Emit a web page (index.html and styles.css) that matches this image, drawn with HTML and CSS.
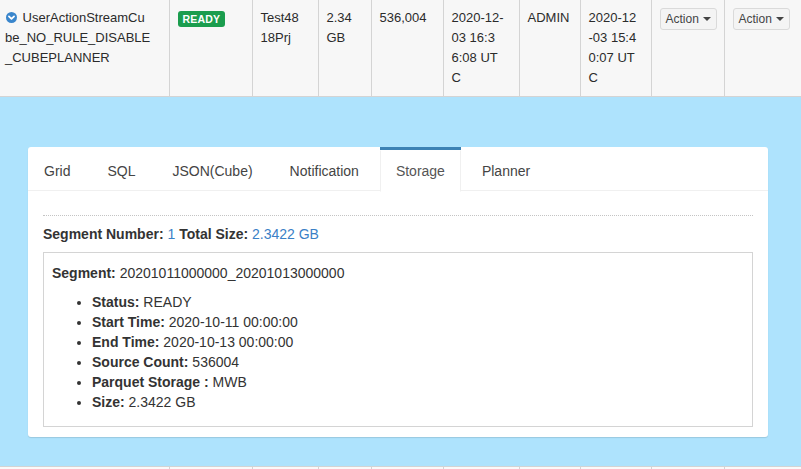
FILE: index.html
```html
<!DOCTYPE html>
<html>
<head>
<meta charset="utf-8">
<link rel="stylesheet" href="styles.css">
</head>
<body>
<table class="cubes">
  <colgroup>
    <col class="w1"><col class="w2"><col class="w3"><col class="w4"><col class="w5">
    <col class="w6"><col class="w7"><col class="w8"><col class="w9"><col class="w10">
  </colgroup>
  <tbody>
    <tr class="row-main">
      <td class="cell-name"><svg class="toggle" viewBox="0 0 12 12" width="11" height="11"><circle cx="6" cy="6" r="6" fill="#3a86cc"/><polyline points="3.2,4.7 6,7.5 8.8,4.7" fill="none" stroke="#fff" stroke-width="1.9" stroke-linecap="round" stroke-linejoin="round"/></svg> UserActionStreamCu<br>be_NO_RULE_DISABLE<br>_CUBEPLANNER</td>
      <td><span class="badge">READY</span></td>
      <td>Test48<br>18Prj</td>
      <td>2.34<br>GB</td>
      <td>536,004</td>
      <td>2020-12-<br>03 16:3<br>6:08 UT<br>C</td>
      <td>ADMIN</td>
      <td>2020-12<br>-03 15:4<br>0:07 UT<br>C</td>
      <td><button class="btn-action">Action <span class="caret"></span></button></td>
      <td><button class="btn-action">Action <span class="caret"></span></button></td>
    </tr>
    <tr class="row-detail">
      <td colspan="10">
        <div class="card">
          <ul class="tabs">
            <li class="tab"><a href="#">Grid</a></li>
            <li class="tab"><a href="#">SQL</a></li>
            <li class="tab"><a href="#">JSON(Cube)</a></li>
            <li class="tab"><a href="#">Notification</a></li>
            <li class="tab active"><a href="#">Storage</a></li>
            <li class="tab"><a href="#">Planner</a></li>
          </ul>
          <div class="tab-content">
            <div class="divider"></div>
            <div class="summary"><b>Segment Number:</b> <span class="val">1</span> <b>Total Size:</b> <span class="val">2.3422 GB</span></div>
            <div class="segment-box">
              <div><b>Segment:</b> 20201011000000_20201013000000</div>
              <ul>
                <li><b>Status:</b> READY</li>
                <li><b>Start Time:</b> 2020-10-11 00:00:00</li>
                <li><b>End Time:</b> 2020-10-13 00:00:00</li>
                <li><b>Source Count:</b> 536004</li>
                <li><b>Parquet Storage :</b> MWB</li>
                <li><b>Size:</b> 2.3422 GB</li>
              </ul>
            </div>
          </div>
        </div>
      </td>
    </tr>
    <tr class="row-next">
      <td></td><td></td><td></td><td></td><td></td><td></td><td></td><td></td><td></td><td></td>
    </tr>
  </tbody>
</table>
</body>
</html>
```

FILE: styles.css
```css
* { box-sizing: border-box; }
html, body { margin: 0; padding: 0; background: #fff; }
body {
  font-family: "Liberation Sans", Arial, Helvetica, sans-serif;
  color: #333;
  font-size: 13px;
  width: 801px;
  height: 469px;
  overflow: hidden;
}

.cubes { border-collapse: collapse; table-layout: fixed; width: 801px; }
.w1 { width: 169px; } .w2 { width: 83px; } .w3 { width: 66px; } .w4 { width: 53px; }
.w5 { width: 72px; } .w6 { width: 76px; } .w7 { width: 61px; } .w8 { width: 71px; }
.w9 { width: 73px; } .w10 { width: 77px; }

.cubes td {
  border: 1px solid #d4d4d4;
  padding: 8px;
  vertical-align: top;
  line-height: 20px;
  font-size: 13px;
  color: #2b2b2b;
  white-space: nowrap;
}
.cubes td:first-child { border-left: 0; }
.row-main td { background: #f7f7f7; border-top: 0; }
.row-main .cell-name { padding-left: 5px; }

.toggle { vertical-align: -1px; margin-left: 1px; margin-right: 2px; }

.badge {
  display: inline-block;
  vertical-align: top;
  margin-top: 3px;
  background: #1b9d4e;
  color: #fff;
  font-weight: bold;
  font-size: 10.5px;
  line-height: 12px;
  padding: 2px 5px;
  border-radius: 3px;
  letter-spacing: 0.2px;
}

.btn-action {
  display: inline-block;
  vertical-align: top;
  font-family: inherit;
  font-size: 12px;
  line-height: 18px;
  padding: 1px 5px;
  height: 22px;
  color: #444;
  background: #f4f4f4;
  border: 1px solid #dadada;
  border-radius: 3px;
}
.caret {
  display: inline-block;
  width: 0; height: 0;
  margin-left: 1px;
  vertical-align: 2px;
  border-top: 4px solid #444;
  border-left: 4px solid transparent;
  border-right: 4px solid transparent;
}

.row-detail td {
  background: #aee3fd;
  padding: 50px 33px 29px 28px;
  white-space: normal;
}

.card {
  background: #fff;
  border-radius: 3px;
  box-shadow: 0 1px 1px rgba(0, 0, 0, 0.12);
}

.tabs {
  display: flex;
  margin: 0;
  padding: 0;
  list-style: none;
  border-bottom: 1px solid #f0f0f0;
}
.tab {
  border-top: 3px solid transparent;
  margin-right: 5px;
  margin-bottom: -2px;
}
.tab a {
  display: block;
  padding: 10px 15px;
  line-height: 20px;
  border: 1px solid transparent;
  font-size: 14px;
  color: #444;
  text-decoration: none;
}
.tab.active { border-top-color: #3c82b4; }
.tab.active a {
  background: #fff;
  border-left-color: #f0f0f0;
  border-right-color: #f0f0f0;
  color: #555;
}

.tab-content { padding: 10px 15px; }
.divider { border-top: 1px dotted #c4c4c4; margin: 14px 0 8px; }
.summary { font-size: 14px; line-height: 20px; color: #333; }
.val { color: #3a80c6; }

.segment-box {
  margin-top: 8px;
  border: 1px solid #d4d4d4;
  padding: 10px 9px 4px 8px;
  font-size: 14px;
  line-height: 20px;
  color: #333;
}
.segment-box ul { margin: 9px 0 10px; padding-left: 40px; }

.row-next td { background: #fafafa; height: 30px; }
```
